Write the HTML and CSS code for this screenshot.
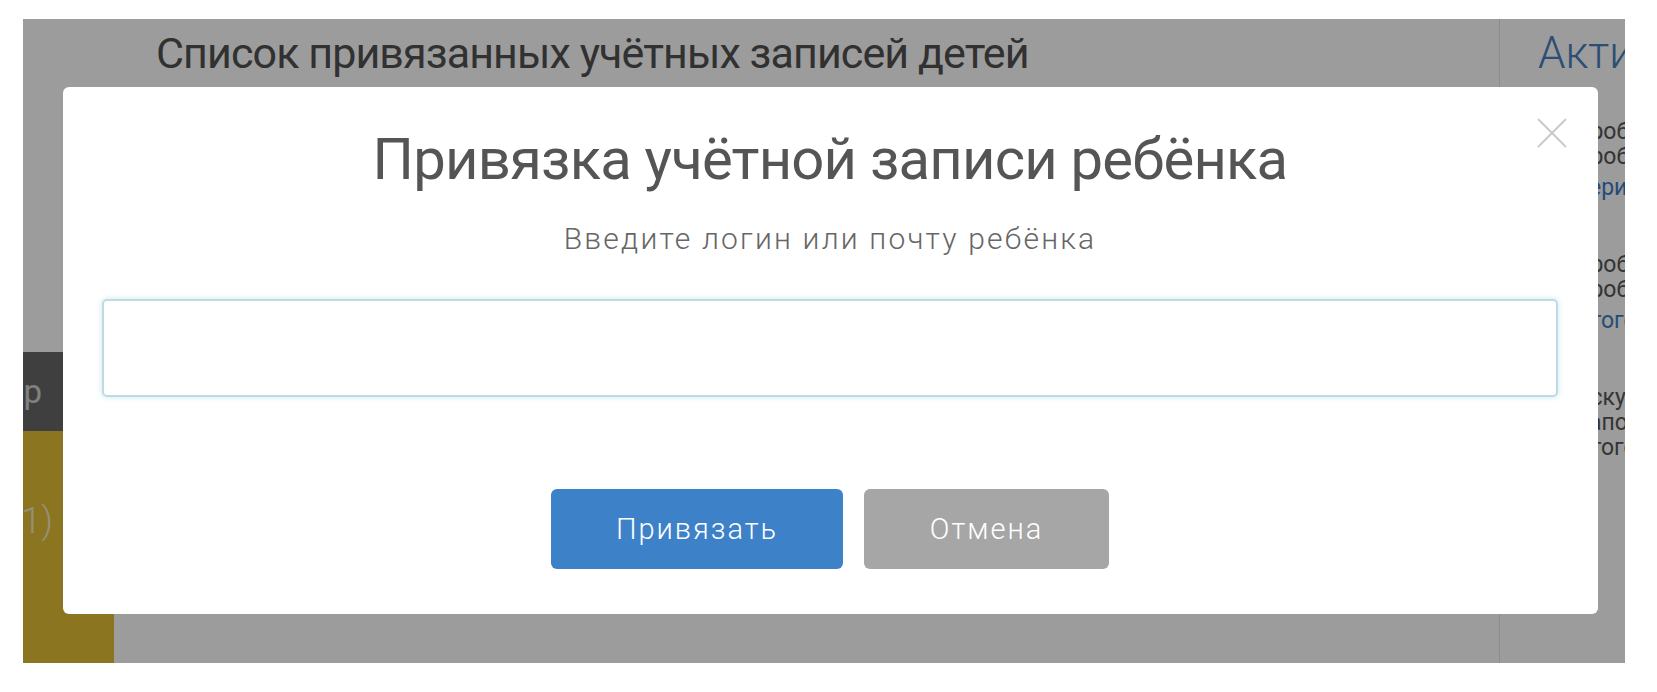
FILE: index.html
```html
<!DOCTYPE html>
<html lang="ru">
<head>
    <meta charset="UTF-8">
    <meta name="viewport" content="width=device-width, initial-scale=1.0">
    <title>Привязка учётной записи ребёнка</title>
    <link rel="stylesheet" href="styles.css">
</head>
<body>
    <div class="screen">
        <div class="page">
            <div class="sidebar">
                <div class="nav-item nav-dark"><span>Фильтр</span></div>
                <div class="nav-item nav-active"><span>Дети (1)</span></div>
            </div>

            <div class="main">
                <h2 class="main-title">Список привязанных учётных записей детей</h2>
            </div>

            <div class="aside">
                <div class="aside-title">Активность</div>
                <div class="aside-group">
                    <div class="aside-line">Пробный ЕГЭ по математике</div>
                    <div class="aside-line">Пробный ОГЭ по физике</div>
                    <div class="aside-line link">Серия тестов</div>
                </div>
                <div class="aside-group">
                    <div class="aside-line">Пробный ЕГЭ по русскому</div>
                    <div class="aside-line">Пробный ОГЭ по химии</div>
                    <div class="aside-line link">Итоговые работы</div>
                </div>
                <div class="aside-group">
                    <div class="aside-line">Искусство</div>
                    <div class="aside-line">Сапоги</div>
                    <div class="aside-line">Итоговое</div>
                </div>
            </div>
        </div>

        <div class="backdrop"></div>

        <div class="modal">
            <button class="modal-close" type="button" aria-label="Закрыть">
                <svg width="32" height="30" viewBox="0 0 32 30">
                    <path d="M2 1 L30 29 M30 1 L2 29" stroke="#c8c8c8" stroke-width="1.8" fill="none"/>
                </svg>
            </button>
            <h1 class="modal-title">Привязка учётной записи ребёнка</h1>
            <p class="modal-text">Введите логин или почту ребёнка</p>
            <input class="modal-input" type="text">
            <div class="modal-actions">
                <button class="btn btn-primary" type="button">Привязать</button>
                <button class="btn btn-cancel" type="button">Отмена</button>
            </div>
        </div>
    </div>
</body>
</html>
```

FILE: styles.css
```css
body {
    margin: 0;
    background-color: #fff;
    font-family: 'Roboto', 'Liberation Sans', sans-serif;
}

.screen {
    position: relative;
    margin: 19px 0 0 23px;
    width: 1602px;
    height: 644px;
    overflow: hidden;
    background-color: #fff;
}

.page {
    display: flex;
    height: 100%;
}

/* left column */
.sidebar {
    width: 91px;
    flex-shrink: 0;
    display: flex;
    flex-direction: column;
    padding-top: 333px;
    box-sizing: border-box;
}

.nav-item {
    display: flex;
    justify-content: flex-end;
    white-space: nowrap;
}

.nav-dark {
    height: 79px;
    align-items: center;
    padding-right: 72px;
    background-color: #686868;
    color: #d2d2d2;
    font-size: 33px;
}

.nav-active {
    flex: 1;
    align-items: flex-start;
    padding-top: 69px;
    padding-right: 61px;
    background-color: #e4c035;
    color: #f4ecc8;
    font-size: 36px;
    font-weight: 300;
}

/* main column */
.main {
    flex: 1;
    padding-left: 42px;
}

.main-title {
    margin: 8px 0 0;
    font-size: 43px;
    font-weight: 400;
    letter-spacing: -0.9px;
    line-height: 52px;
    color: #505050;
}

/* right column */
.aside {
    width: 126px;
    flex-shrink: 0;
    box-sizing: border-box;
    border-left: 1px solid #e4e4e4;
    padding-left: 38px;
    overflow: hidden;
    white-space: nowrap;
}

.aside-title {
    margin-top: 8px;
    font-size: 44px;
    font-weight: 300;
    line-height: 52px;
    color: #4a80be;
}

.aside-group {
    margin-top: 40px;
}

.aside-group + .aside-group {
    margin-top: 52px;
}

.aside-line {
    font-size: 23px;
    line-height: 25px;
    color: #555;
    padding-left: 36px;
}

.aside-line.link {
    margin-top: 6px;
    color: #3c7dc4;
}

/* overlay */
.backdrop {
    position: absolute;
    inset: 0;
    background-color: rgba(0, 0, 0, 0.39);
}

.modal {
    position: absolute;
    left: 40px;
    top: 68px;
    width: 1535px;
    height: 527px;
    box-sizing: border-box;
    padding: 37px 40px 0 39px;
    background-color: #fff;
    border-radius: 6px;
    text-align: center;
}

.modal-close {
    position: absolute;
    top: 31px;
    right: 30px;
    padding: 0;
    border: none;
    background: none;
    cursor: pointer;
    line-height: 0;
}

.modal-title {
    margin: 0;
    font-size: 58px;
    font-weight: 400;
    letter-spacing: -0.8px;
    line-height: 70px;
    color: #555;
}

.modal-text {
    margin: 27px 0 0;
    font-size: 30px;
    font-weight: 300;
    letter-spacing: 2.2px;
    line-height: 35px;
    color: #666;
}

.modal-input {
    display: block;
    margin-top: 43px;
    width: 100%;
    height: 98px;
    box-sizing: border-box;
    border: 2px solid #bcdce2;
    border-radius: 5px;
    box-shadow: 0 0 6px rgba(170, 215, 228, 0.6);
    outline: none;
    font-size: 28px;
    padding: 0 20px;
}

.modal-actions {
    display: flex;
    justify-content: center;
    gap: 21px;
    margin-top: 92px;
}

.btn {
    height: 80px;
    border: none;
    border-radius: 6px;
    color: #fff;
    font-family: inherit;
    font-size: 29px;
    font-weight: 300;
    letter-spacing: 2px;
    cursor: pointer;
}

.btn-primary {
    width: 292px;
    background-color: #3d82c9;
}

.btn-cancel {
    width: 245px;
    background-color: #a6a6a6;
}
```
